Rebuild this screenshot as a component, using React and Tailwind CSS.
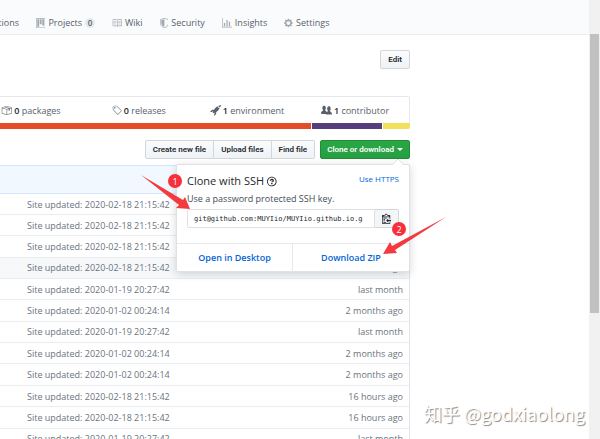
const ICONS = {
  project: [15, "M10 12h3V2h-3v10zm-4-2h3V2H6v8zm-4 4h3V2H2v12zm-1 1h13V1H1v14zM14 0H1a1 1 0 0 0-1 1v14a1 1 0 0 0 1 1h13a1 1 0 0 0 1-1V1a1 1 0 0 0-1-1z"],
  book: [16, "M3 5h4v1H3V5zm0 3h4V7H3v1zm0 2h4V9H3v1zm11-5h-4v1h4V5zm0 2h-4v1h4V7zm0 2h-4v1h4V9zm2-6v9c0 .55-.45 1-1 1H9.5l-1 1-1-1H2c-.55 0-1-.45-1-1V3c0-.55.45-1 1-1h5.5l1 1 1-1H15c.55 0 1 .45 1 1zm-8 .5L7.5 3H2v9h6V3.5zm7-.5H9.5l-.5.5V12h6V3z"],
  shield: [14, "M0 2l7-2 7 2v6.02C14 12.69 8.69 16 7 16c-1.69 0-7-3.31-7-7.98V2zm1 .75L7 1l6 1.75v5.268C13 12.104 8.449 15 7 15c-1.449 0-6-2.896-6-6.982V2.75zm1 .75L7 2v12c-1.207 0-5-2.482-5-5.985V3.5z"],
  graph: [16, "M16 14v1H0V0h1v14h15zM5 13H3V8h2v5zm4 0H7V3h2v10zm4 0h-2V6h2v7z"],
  gear: [14, "M14 8.77v-1.6l-1.94-.64-.45-1.09.88-1.84-1.13-1.13-1.81.91-1.09-.45-.69-1.92h-1.6l-.63 1.94-1.11.45-1.84-.88-1.13 1.13.91 1.81-.45 1.09L0 7.23v1.59l1.94.64.45 1.09-.88 1.84 1.13 1.13 1.81-.91 1.09.45.69 1.92h1.59l.63-1.94 1.11-.45 1.84.88 1.13-1.13-.92-1.81.47-1.09L14 8.75v.02zM7 11c-1.66 0-3-1.34-3-3s1.34-3 3-3 3 1.34 3 3-1.34 3-3 3z"],
  package: [16, "M1 4.27v7.47c0 .45.3.84.75.97l6.5 1.73c.16.05.34.05.5 0l6.5-1.73c.45-.13.75-.52.75-.97V4.27c0-.45-.3-.84-.75-.97l-6.5-1.74a1.4 1.4 0 0 0-.5 0L1.75 3.3c-.45.13-.75.52-.75.97zm7 9.09l-6-1.59V5l6 1.61v6.75zM2 4l2.5-.67L11 5.06l-2.5.67L2 4zm13 7.77l-6 1.59V6.61l2-.55V8.5l2-.53V5.53L15 5v6.77zm-2-7.24L6.5 2.8l2-.53L15 4l-2 .53z"],
  tag: [14, "M7.73 1.73C7.26 1.26 6.62 1 5.96 1H3.5C2.13 1 1 2.13 1 3.5v2.47c0 .66.27 1.3.73 1.77l6.06 6.06c.39.39 1.02.39 1.41 0l4.59-4.59a.996.996 0 0 0 0-1.41L7.73 1.73zM2.38 7.09c-.31-.3-.47-.7-.47-1.13V3.5c0-.88.72-1.59 1.59-1.59h2.47c.42 0 .83.16 1.13.47l6.14 6.13-4.73 4.73-6.13-6.15zM3.01 3h2v2H3V3h.01z"],
  rocket: [16, "M12.17 3.83c-.27-.27-.47-.55-.63-.88-.16-.31-.27-.66-.34-1.02-.58.33-1.16.7-1.73 1.13-.58.44-1.14.94-1.69 1.48-.7.7-1.33 1.81-1.78 2.45H3L0 10h3l2-2c-.34.77-1.02 2.98-1 3l1 1c.02.02 2.23-.64 3-1l-2 2v3l3-3v-3c.64-.45 1.75-1.09 2.45-1.78.55-.55 1.05-1.13 1.47-1.7.44-.58.81-1.16 1.14-1.72-.36-.08-.7-.19-1.03-.34a3.39 3.39 0 0 1-.86-.63zM16 0s-.09.38-.3 1.06c-.2.7-.55 1.58-1.06 2.66-.7-.08-1.27-.33-1.66-.72-.39-.39-.63-.94-.7-1.64C13.36.84 14.23.48 14.92.28 15.62.08 16 0 16 0z"],
  organization: [16, "M16 12.999c0 .439-.45 1-1 1H7.995c-.539 0-.994-.447-.995-.999H1c-.54 0-1-.561-1-1 0-2.634 3-4 3-4s.229-.409 0-1c-.841-.621-1.058-.59-1-3 .058-2.419 1.367-3 2.5-3s2.442.58 2.5 3c.058 2.41-.159 2.379-1 3-.229.59 0 1 0 1s1.549.711 2.42 2.088C9.196 9.369 10 8.999 10 8.999s.229-.409 0-1c-.841-.62-1.058-.59-1-3 .058-2.419 1.367-3 2.5-3s2.437.581 2.495 3c.059 2.41-.158 2.38-1 3-.229.59 0 1 0 1s3.005 1.366 3.005 4z"],
  clippy: [14, "M2 13h4v1H2v-1zm5-6H2v1h5V7zm2 3V8l-3 3 3 3v-2h5v-2H9zM4.5 9H2v1h2.5V9zM2 12h2.5v-1H2v1zm9 1h1v2c-.02.28-.11.52-.3.7-.19.18-.42.28-.7.3H1c-.55 0-1-.45-1-1V4c0-.55.45-1 1-1h3c0-1.11.89-2 2-2 1.11 0 2 .89 2 2h3c.55 0 1 .45 1 1v5h-1V6H1v9h10v-2zM2 5h8c0-.55-.45-1-1-1H8c-.55 0-1-.45-1-1s-.45-1-1-1-1 .45-1 1-.45 1-1 1H3c-.55 0-1 .45-1 1z"],
  question: [14, "M6 10h2v2H6v-2zm4-3.5C10 8.64 8 9 8 9H6c0-.55.45-1 1-1h.5c.28 0 .5-.22.5-.5v-1c0-.28-.22-.5-.5-.5h-1c-.28 0-.5.22-.5.5V7H4c0-1.5 1.5-3 3-3s3 1 3 2.5zM7 2.3c3.14 0 5.7 2.56 5.7 5.7s-2.56 5.7-5.7 5.7A5.71 5.71 0 0 1 1.3 8c0-3.14 2.56-5.7 5.7-5.7zM7 1C3.14 1 0 4.14 0 8s3.14 7 7 7 7-3.14 7-7-3.14-7-7-7z"],
};

function Icon({ name, className = "h-[10px]" }) {
  const [width, d] = ICONS[name];
  return (
    <svg viewBox={`0 0 ${width} 16`} aria-hidden="true" className={`w-auto shrink-0 ${className}`}>
      <path fill="currentColor" fillRule="evenodd" d={d} />
    </svg>
  );
}

const NAV = [
  { icon: "project", label: "Projects", count: 0 },
  { icon: "book", label: "Wiki" },
  { icon: "shield", label: "Security" },
  { icon: "graph", label: "Insights" },
  { icon: "gear", label: "Settings" },
];

const STATS = [
  { icon: "package", count: 0, label: "packages" },
  { icon: "tag", count: 0, label: "releases" },
  { icon: "rocket", count: 1, label: "environment", dark: true },
  { icon: "organization", count: 1, label: "contributor", dark: true },
];

const FEB = "2020-02-18 21:15:42";
const JAN19 = "2020-01-19 20:27:42";
const JAN2 = "2020-01-02 00:24:14";
const ROWS = [
  [FEB, "16 hours ago"],
  [FEB, "16 hours ago"],
  [FEB, "16 hours ago"],
  [FEB, "16 hours ago"],
  [JAN19, "last month"],
  [JAN2, "2 months ago"],
  [JAN19, "last month"],
  [JAN2, "2 months ago"],
  [JAN2, "2 months ago"],
  [FEB, "16 hours ago"],
  [FEB, "16 hours ago"],
  [JAN19, "last month"],
];

const BUTTON =
  "h-[19px] border border-[#d3d6d9] bg-linear-to-b from-[#fafbfc] to-[#eff3f6] px-[7px] font-['Roboto',sans-serif] text-[8px] font-semibold text-[#24292e] whitespace-nowrap";

function Nav() {
  return (
    <header className="h-[35px] border-b border-[#eaecef] bg-[#fafbfc]">
      <nav className="flex h-full items-center gap-[17px] pt-[11px] text-[9px] text-[#586069]">
        <a href="#actions" className="flex w-[19px] justify-end overflow-hidden">
          Actions
        </a>
        {NAV.map((item) => (
          <a key={item.label} href={`#${item.label}`} className="flex items-center gap-[3px] whitespace-nowrap">
            <Icon name={item.icon} className="h-[10px] text-[#a3a8ae]" />
            {item.label}
            {item.count !== undefined && (
              <span className="grid size-[10px] place-items-center rounded-full bg-[#e7e8ea] text-[8px] leading-[10px] font-semibold">
                {item.count}
              </span>
            )}
          </a>
        ))}
      </nav>
    </header>
  );
}

function Stats() {
  return (
    <section className="mt-[27px] overflow-hidden rounded-r-[2px]">
      <ul className="-ml-6 grid h-[27px] grid-cols-4 border border-b-0 border-[#e6e8eb] pt-px text-[9px] text-[#586069]">
        {STATS.map((s) => (
          <li key={s.label} className="flex items-center justify-center">
            <a href={`#${s.label}`} className="flex items-center gap-[2px] whitespace-nowrap">
              <Icon name={s.icon} className={s.dark ? "h-[11px] text-[#586069]" : "h-[11px] text-[#7b828a]"} />
              <span>
                <b className="font-semibold text-[#24292e]">{s.count}</b> {s.label}
              </span>
            </a>
          </li>
        ))}
      </ul>
      <div className="flex h-[6px] gap-px">
        <span className="grow bg-[#e34c26]" />
        <span className="w-[70px] bg-[#563d7c]" />
        <span className="w-[27px] bg-[#f1e05a]" />
      </div>
    </section>
  );
}

function Badge({ children, className }) {
  return (
    <span
      className={`absolute grid size-[14px] place-items-center rounded-full bg-[#f5303c] text-[9px] leading-none text-white ${className}`}
    >
      {children}
    </span>
  );
}

function ClonePopup() {
  return (
    <div
      role="dialog"
      aria-label="Clone with SSH"
      className="absolute top-[24px] right-0 z-10 w-[234px] rounded-[2px] border border-[#dfe1e4] bg-white text-[#444d56] shadow-[0_2px_8px_rgba(27,31,35,0.18)]"
    >
      <svg viewBox="0 0 12 6" aria-hidden="true" className="absolute -top-[6px] right-[5px] h-[6px] w-[12px]">
        <path d="M0 6 6 0l6 6" fill="#fff" stroke="#dfe1e4" />
      </svg>
      <div className="px-[10px] pt-[9px]">
        <div className="flex items-center justify-between">
          <h2 className="flex items-center gap-[3px] text-[11px] leading-[14px] font-medium text-[#24292e]">
            Clone with SSH
            <Icon name="question" className="h-[11px]" />
          </h2>
          <a href="#https" className="pb-1 text-[8px] leading-[10px] text-[#0366d6]">
            Use HTTPS
          </a>
        </div>
        <p className="mt-[5px] text-[9px] leading-[12px]">Use a password protected SSH key.</p>
        <div className="mt-[4px] flex h-[19px]">
          <input
            readOnly
            aria-label="Clone URL"
            value="git@github.com:MUYIio/MUYIio.github.io.g"
            className="min-w-0 grow rounded-l-[2px] border border-[#dfe1e4] pl-[6px] font-['DejaVu_Sans_Mono',monospace] text-[7px] text-[#24292e]"
          />
          <button
            type="button"
            aria-label="Copy URL"
            className="grid w-[24px] place-items-center rounded-r-[2px] border border-l-0 border-[#d3d6d9] bg-[#f3f5f7] text-[#24292e]"
          >
            <Icon name="clippy" className="h-[11px]" />
          </button>
        </div>
      </div>
      <div className="mt-[15px] grid h-[28px] grid-cols-2 border-t border-[#e6e8eb] text-center text-[9px] leading-[28px] font-semibold text-[#0366d6]">
        <a href="#desktop" className="border-r border-[#e6e8eb]">
          Open in Desktop
        </a>
        <a href="#zip">Download ZIP</a>
      </div>
      <Badge className="top-[9px] -left-[9px]">1</Badge>
      <Badge className="top-[57px] right-[3px]">2</Badge>
      <svg
        viewBox="140 160 310 110"
        aria-hidden="true"
        className="pointer-events-none absolute -top-[6px] -left-[37px] h-[110px] w-[310px] max-w-none"
      >
        <path fill="#f23a3f" d="M141 176 183 201 185 198 190 210 176 209 179 206Z" />
        <path fill="#f23a3f" d="M446 218 395 251 397 254 383 255 390 243 392 247Z" />
      </svg>
    </div>
  );
}

function Actions() {
  return (
    <div className="mt-[11px] flex justify-end gap-[5px]">
      <div className="flex">
        <button type="button" className={`${BUTTON} rounded-l-[2px]`}>Create new file</button>
        <button type="button" className={`${BUTTON} border-l-0`}>Upload files</button>
        <button type="button" className={`${BUTTON} rounded-r-[2px] border-l-0`}>Find file</button>
      </div>
      <div className="relative">
        <button
          type="button"
          aria-expanded="true"
          className="flex h-[19px] items-center gap-[3px] rounded-[2px] border border-[#248a3a] bg-linear-to-b from-[#2aa745] to-[#269f42] px-[6px] font-['Roboto',sans-serif] text-[8px] font-semibold whitespace-nowrap text-white"
        >
          Clone or download
          <span className="border-x-[3px] border-t-[3px] border-x-transparent border-t-white" />
        </button>
        <ClonePopup />
      </div>
    </div>
  );
}

function Files() {
  return (
    <section className="mt-[6px] border-r border-[#e1e4e8]">
      <div className="h-[29px] border-y border-[#d3e6fb] bg-[#f1f8ff]" />
      <table className="h-64 w-full text-[9px] text-[#6a737d]">
        <tbody>
          {ROWS.map(([stamp, age], i) => (
            <tr key={i} className={`border-b border-[#eaecef] ${i === 3 ? "bg-[#f6f8fa]" : ""}`}>
              <td className="pt-px pb-0 pl-[27px]">Site updated: {stamp}</td>
              <td className="pt-px pr-[6px] pb-0 text-right">{age}</td>
            </tr>
          ))}
        </tbody>
      </table>
    </section>
  );
}

export default function App() {
  return (
    <div className="relative flex h-screen overflow-hidden bg-white font-['Open_Sans','Noto_Sans',sans-serif] leading-[12px]">
      <div className="min-w-0 grow">
        <Nav />
        <main className="max-w-[410px] pt-[15px]">
          <div className="flex justify-end">
            <button type="button" className={`${BUTTON} rounded-[2px]`}>Edit</button>
          </div>
          <Stats />
          <Actions />
          <Files />
        </main>
      </div>
      <div className="w-[11px] shrink-0 bg-[#f1f1f1] px-px pt-[34px]">
        <div className="h-[279px] bg-[#c1c1c1]" />
      </div>
      <p className="absolute right-[15px] bottom-[14px] font-['Noto_Sans_CJK_SC',sans-serif] text-[18px] leading-[24px] text-white [text-shadow:1px_1px_1px_#888]">
        知乎 @godxiaolong
      </p>
    </div>
  );
}
